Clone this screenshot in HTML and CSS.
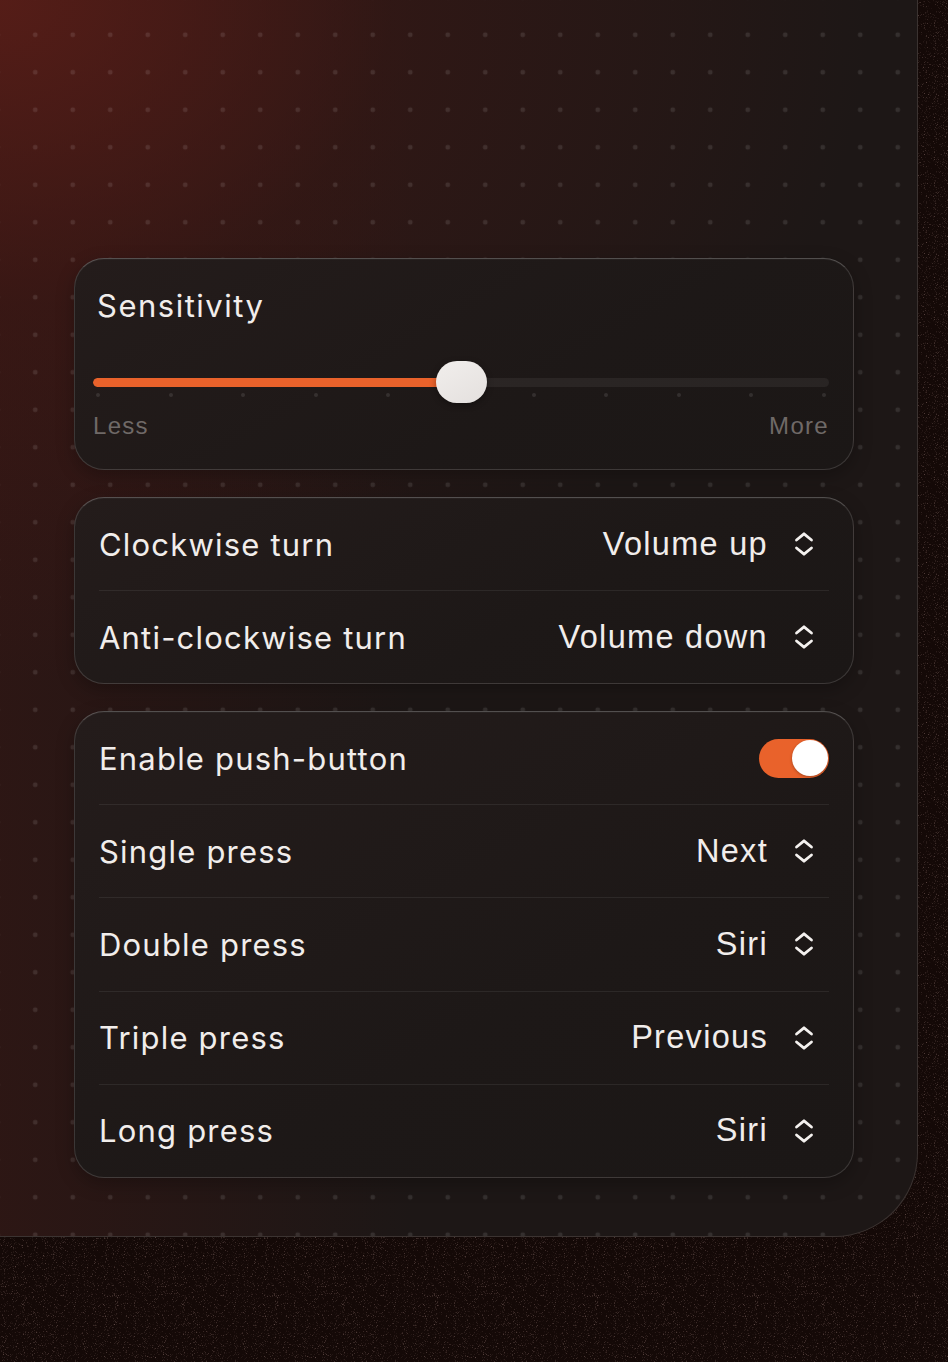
FILE: index.html
```html
<!DOCTYPE html>
<html lang="en">
<head>
<meta charset="utf-8">
<title>Dial settings</title>
<link rel="stylesheet" href="styles.css">
</head>
<body>
<div class="stage">
  <div class="panel">
    <section class="card card-slider">
      <h2 class="title">Sensitivity</h2>
      <div class="slider">
        <div class="track"><div class="fill" style="width:50%"></div></div>
        <div class="ticks">
          <span></span><span></span><span></span><span></span><span></span><span></span><span></span><span></span><span></span><span></span><span></span>
        </div>
        <div class="thumb" style="left:50%"></div>
      </div>
      <div class="range-labels"><span>Less</span><span>More</span></div>
    </section>

    <section class="card list">
      <div class="row">
        <span class="label">Clockwise turn</span>
        <span class="value">Volume up<svg class="chev" viewBox="0 0 24 28" width="24" height="28"><path d="M4.5 10 L12 3.8 L19.5 10 M4.5 18 L12 24.2 L19.5 18"/></svg></span>
      </div>
      <div class="row">
        <span class="label">Anti-clockwise turn</span>
        <span class="value">Volume down<svg class="chev" viewBox="0 0 24 28" width="24" height="28"><path d="M4.5 10 L12 3.8 L19.5 10 M4.5 18 L12 24.2 L19.5 18"/></svg></span>
      </div>
    </section>

    <section class="card list">
      <div class="row">
        <span class="label">Enable push-button</span>
        <span class="toggle on"><span class="knob"></span></span>
      </div>
      <div class="row">
        <span class="label">Single press</span>
        <span class="value">Next<svg class="chev" viewBox="0 0 24 28" width="24" height="28"><path d="M4.5 10 L12 3.8 L19.5 10 M4.5 18 L12 24.2 L19.5 18"/></svg></span>
      </div>
      <div class="row">
        <span class="label">Double press</span>
        <span class="value">Siri<svg class="chev" viewBox="0 0 24 28" width="24" height="28"><path d="M4.5 10 L12 3.8 L19.5 10 M4.5 18 L12 24.2 L19.5 18"/></svg></span>
      </div>
      <div class="row">
        <span class="label">Triple press</span>
        <span class="value">Previous<svg class="chev" viewBox="0 0 24 28" width="24" height="28"><path d="M4.5 10 L12 3.8 L19.5 10 M4.5 18 L12 24.2 L19.5 18"/></svg></span>
      </div>
      <div class="row">
        <span class="label">Long press</span>
        <span class="value">Siri<svg class="chev" viewBox="0 0 24 28" width="24" height="28"><path d="M4.5 10 L12 3.8 L19.5 10 M4.5 18 L12 24.2 L19.5 18"/></svg></span>
      </div>
    </section>
  </div>
</div>
</body>
</html>
```

FILE: styles.css
```css
* { box-sizing: border-box; }

html, body {
  margin: 0;
  padding: 0;
}

body {
  background: #150a08;
  width: 948px;
  height: 1362px;
  overflow: hidden;
  font-family: "Inter", "Liberation Sans", sans-serif;
  color: #efebe9;
}

.stage {
  width: 948px;
  height: 1362px;
  background:
    url("data:image/svg+xml,%3Csvg xmlns='http://www.w3.org/2000/svg' width='160' height='160'%3E%3Cfilter id='n'%3E%3CfeTurbulence type='fractalNoise' baseFrequency='1.1' numOctaves='2' stitchTiles='stitch'/%3E%3CfeColorMatrix values='0 0 0 0 0.42 0 0 0 0 0.26 0 0 0 0 0.24 0 0 0 1.6 -0.95'/%3E%3C/filter%3E%3Crect width='160' height='160' filter='url(%23n)'/%3E%3C/svg%3E"),
    #140907;
}

.panel {
  width: 918px;
  height: 1237px;
  padding: 258px 0 0 74px;
  border-right: 1px solid #3b3331;
  border-bottom: 1px solid #3b3331;
  border-bottom-right-radius: 84px;
  display: flex;
  flex-direction: column;
  gap: 27px;
  background:
    radial-gradient(circle, rgba(255, 255, 255, 0.1) 2.1px, transparent 2.7px) 16.5px 16px / 37.5px 37.5px,
    radial-gradient(ellipse 95% 55% at 0% 0%, rgba(92, 30, 24, 0.85) 0%, rgba(70, 24, 20, 0.45) 45%, rgba(40, 22, 20, 0) 100%),
    linear-gradient(90deg, rgba(55, 22, 19, 0.6) 0%, rgba(30, 22, 21, 0) 45%),
    #1d1716;
}

.card {
  width: 780px;
  border-radius: 30px;
  border: 1px solid rgba(255, 255, 255, 0.14);
  border-top-color: rgba(255, 255, 255, 0.24);
  background: linear-gradient(150deg, #241c1b 0%, #1d1817 60%, #1b1716 100%);
  box-shadow: 0 6px 18px rgba(0, 0, 0, 0.25), inset 0 1px 0 rgba(255, 255, 255, 0.03);
}

/* Sensitivity card */
.card-slider {
  padding: 27px 24px 28px 18px;
}

.title {
  margin: 0 0 35px 4px;
  font-size: 31px;
  line-height: 40px;
  font-weight: 400;
  letter-spacing: 1.5px;
  color: #f1edeb;
}

.slider {
  position: relative;
  height: 42px;
  padding-top: 17px;
}

.track {
  height: 9px;
  border-radius: 5px;
  background: rgba(255, 255, 255, 0.06);
  overflow: hidden;
}

.fill {
  height: 100%;
  border-radius: 5px;
  background: #e9622b;
}

.ticks {
  display: flex;
  justify-content: space-between;
  margin-top: 6px;
  padding: 0 3px;
}

.ticks span {
  width: 4px;
  height: 4px;
  border-radius: 50%;
  background: rgba(255, 255, 255, 0.1);
}

.thumb {
  position: absolute;
  top: 0;
  width: 51px;
  height: 42px;
  margin-left: -25.5px;
  border-radius: 21px;
  background: linear-gradient(150deg, #f1eeec 0%, #e4e0de 100%);
  box-shadow: 0 2px 6px rgba(0, 0, 0, 0.35);
}

.range-labels {
  display: flex;
  justify-content: space-between;
  margin-top: 8px;
  font-family: "Liberation Sans", Arial, sans-serif;
  font-size: 24px;
  line-height: 30px;
  letter-spacing: 1.3px;
  color: #6f6967;
}

/* list cards */
.row {
  height: 92px;
  margin: 0 24px;
  display: flex;
  align-items: center;
  justify-content: space-between;
}

.row + .row {
  height: 93px;
  border-top: 1px solid rgba(255, 255, 255, 0.07);
}

.list:last-child .row + .row {
  height: 93.25px;
}

.label {
  font-size: 31px;
  font-weight: 400;
  letter-spacing: 1.2px;
  color: #f1edeb;
}

.value {
  display: flex;
  align-items: center;
  padding-right: 13px;
  font-family: "Liberation Sans", Arial, sans-serif;
  font-size: 32.5px;
  letter-spacing: 1.3px;
  color: #f1edeb;
}

.chev {
  margin-left: 24px;
  fill: none;
  stroke: #f4f1ef;
  stroke-width: 2.8;
  stroke-linecap: round;
  stroke-linejoin: round;
}

.toggle {
  width: 70px;
  height: 39px;
  padding: 1.5px;
  border-radius: 20px;
  background: #e9622b;
  display: flex;
  justify-content: flex-end;
}

.knob {
  width: 36px;
  height: 36px;
  border-radius: 50%;
  background: #ffffff;
  box-shadow: 0 1px 3px rgba(0, 0, 0, 0.3);
}
```
